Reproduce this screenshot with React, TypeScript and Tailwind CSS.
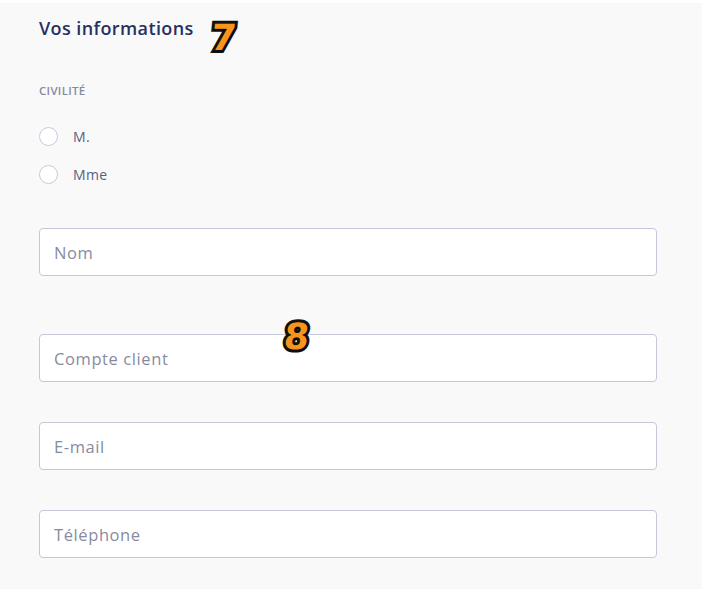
import React from 'react';

const font = "font-['Open_Sans',sans-serif]";

// --- Step badge (orange digit with black outline) ---
const Badge: React.FC<{ n: string; className: string }> = ({ n, className }) => (
  <span
    className={`absolute ${className} -skew-x-6 font-['DejaVu_Sans',sans-serif] font-bold text-[36px] leading-none text-[#f7941d] [-webkit-text-stroke:6px_#111] [paint-order:stroke_fill] [text-shadow:1px_2px_2px_rgba(0,0,0,0.35)]`}
  >
    {n}
  </span>
);

const Radio: React.FC<{ label: string }> = ({ label }) => (
  <label className="flex items-center gap-[15px] h-[20px]">
    <span className="w-[19px] h-[19px] rounded-full border border-[#c8cadb] bg-white" />
    <span className="text-[14px] tracking-[0.4px] text-[#595e82]">{label}</span>
  </label>
);

const Field: React.FC<{ placeholder: string; className?: string }> = ({ placeholder, className = '' }) => (
  <input
    placeholder={placeholder}
    className={`block w-full h-[48px] px-[14px] rounded-[4px] border border-[#c5c7da] bg-white text-[16.5px] tracking-[0.6px] placeholder:text-[#878b9f] outline-none ${className}`}
  />
);

export default function App() {
  return (
    <div className={`${font} relative w-[702px] h-[589px] bg-[#f9f9fa] border-t-[3px] border-white overflow-hidden`}>
      <div className="pl-[39px] pr-[45px] pt-[13px]">
        <h2 className="text-[18px] font-semibold tracking-[0.4px] text-[#27305f] leading-[24px]">Vos informations</h2>

        <div className="mt-[42px] text-[11.5px] font-semibold uppercase text-[#868aa0] tracking-[0.3px]">Civilité</div>

        <div className="mt-[27px] flex flex-col gap-[18px]">
          <Radio label="M." />
          <Radio label="Mme" />
        </div>

        <Field placeholder="Nom" className="mt-[44px]" />
        <Field placeholder="Compte client" className="mt-[58px]" />
        <Field placeholder="E-mail" className="mt-[40px]" />
        <Field placeholder="Téléphone" className="mt-[40px]" />
      </div>

      <Badge n="7" className="left-[211px] top-[17px]" />
      <Badge n="8" className="left-[284px] top-[316px]" />
    </div>
  );
}
